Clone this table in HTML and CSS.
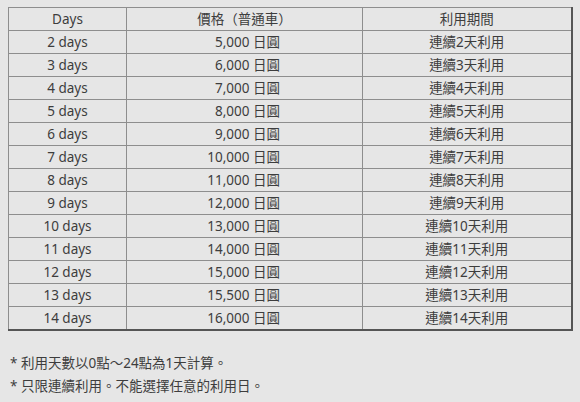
FILE: index.html
```html
<!DOCTYPE html>
<html lang="zh-Hant">
<head>
<meta charset="utf-8">
<link rel="stylesheet" href="styles.css">
</head>
<body>
<div class="page">
  <table class="price-table">
    <colgroup>
      <col class="c1"><col class="c2"><col class="c3">
    </colgroup>
    <thead>
      <tr><th>Days</th><th>價格（普通車）</th><th>利用期間</th></tr>
    </thead>
    <tbody>
      <tr><td>2 days</td><td class="price">5,000 日圓</td><td>連續2天利用</td></tr>
      <tr><td>3 days</td><td class="price">6,000 日圓</td><td>連續3天利用</td></tr>
      <tr><td>4 days</td><td class="price">7,000 日圓</td><td>連續4天利用</td></tr>
      <tr><td>5 days</td><td class="price">8,000 日圓</td><td>連續5天利用</td></tr>
      <tr><td>6 days</td><td class="price">9,000 日圓</td><td>連續6天利用</td></tr>
      <tr><td>7 days</td><td class="price">10,000 日圓</td><td>連續7天利用</td></tr>
      <tr><td>8 days</td><td class="price">11,000 日圓</td><td>連續8天利用</td></tr>
      <tr><td>9 days</td><td class="price">12,000 日圓</td><td>連續9天利用</td></tr>
      <tr><td>10 days</td><td class="price">13,000 日圓</td><td>連續10天利用</td></tr>
      <tr><td>11 days</td><td class="price">14,000 日圓</td><td>連續11天利用</td></tr>
      <tr><td>12 days</td><td class="price">15,000 日圓</td><td>連續12天利用</td></tr>
      <tr><td>13 days</td><td class="price">15,500 日圓</td><td>連續13天利用</td></tr>
      <tr><td>14 days</td><td class="price">16,000 日圓</td><td>連續14天利用</td></tr>
    </tbody>
  </table>
  <div class="notes">
    <p>* 利用天數以0點～24點為1天計算。</p>
    <p>* 只限連續利用。不能選擇任意的利用日。</p>
  </div>
</div>
</body>
</html>
```
FILE: styles.css
```css
html, body {
  margin: 0;
  padding: 0;
  background: #e6e6e6;
}
body {
  font-family: "Noto Sans", "Noto Sans CJK TC", sans-serif;
  color: #3d3d3d;
}
.page {
  padding: 7px 8px 0 8px;
}
.price-table {
  border-collapse: collapse;
  width: 563px;
  table-layout: fixed;
  font-size: 13.5px;
  border-top: 1px solid #8a8a8a;
  border-left: 1px solid #8a8a8a;
  border-right: 2px solid #555;
  border-bottom: 2px solid #555;
}
.c1 { width: 118px; }
.c2 { width: 236px; }
.c3 { width: 209px; }
.price-table th,
.price-table td {
  height: 22px;
  padding: 0;
  border: 1px solid #8e8e8e;
  text-align: center;
  font-weight: normal;
  line-height: 22px;
  white-space: nowrap;
}
.price-table td.price {
  text-align: right;
  padding-right: 82px;
}
.notes {
  margin-top: 21px;
  padding-left: 2px;
  font-size: 13.5px;
  color: #3d3d3d;
}
.notes p {
  margin: 0;
  line-height: 23px;
}
```
